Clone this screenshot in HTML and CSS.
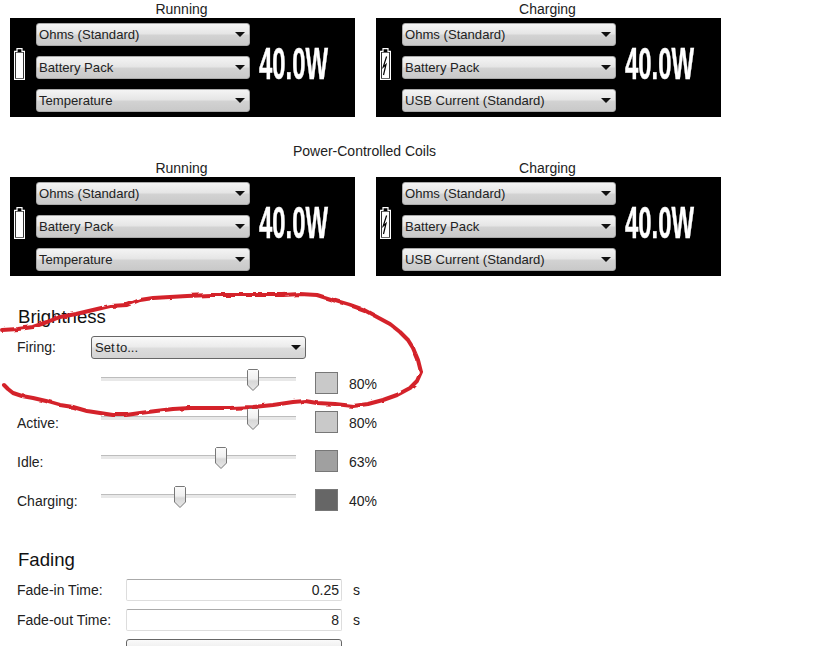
FILE: index.html
```html
<!DOCTYPE html>
<html lang="en">
<head>
  <meta charset="UTF-8" />
  <title>Display Settings</title>
  <link rel="stylesheet" href="styles.css">
</head>
<body>
  <div class="page">
    <div class="display-row">
      <div class="display-col">
        <div class="col-label">Running</div>
        <div class="panel">
          <svg class="battery" width="11" height="32" viewBox="0 0 11 32">
            <path d="M3 .6H8V3.3H10.4V31.4H.6V3.3H3Z" fill="none" stroke="#fff" stroke-width="1.2"/>
            <rect x="2" y="4.6" width="7" height="25.6" fill="#fff"/>
          </svg>
          <div class="dropdown-stack">
            <div class="dropdown">Ohms (Standard)</div>
            <div class="dropdown">Battery Pack</div>
            <div class="dropdown">Temperature</div>
          </div>
          <div class="watts"><span>40.0W</span></div>
        </div>
      </div>
      <div class="display-col">
        <div class="col-label">Charging</div>
        <div class="panel">
          <svg class="battery" width="11" height="32" viewBox="0 0 11 32">
            <path d="M3 .6H8V3.3H10.4V31.4H.6V3.3H3Z" fill="none" stroke="#fff" stroke-width="1.2"/>
            <rect x="2" y="4.6" width="7" height="25.6" fill="#fff"/>
            <path d="M6.6 8.5 3.2 19 6 16.5 3.5 27" fill="none" stroke="#000" stroke-width="1.2"/>
          </svg>
          <div class="dropdown-stack">
            <div class="dropdown">Ohms (Standard)</div>
            <div class="dropdown">Battery Pack</div>
            <div class="dropdown">USB Current (Standard)</div>
          </div>
          <div class="watts"><span>40.0W</span></div>
        </div>
      </div>
    </div>

    <div class="group-title">Power-Controlled Coils</div>
    <div class="display-row">
      <div class="display-col">
        <div class="col-label">Running</div>
        <div class="panel">
          <svg class="battery" width="11" height="32" viewBox="0 0 11 32">
            <path d="M3 .6H8V3.3H10.4V31.4H.6V3.3H3Z" fill="none" stroke="#fff" stroke-width="1.2"/>
            <rect x="2" y="4.6" width="7" height="25.6" fill="#fff"/>
          </svg>
          <div class="dropdown-stack">
            <div class="dropdown">Ohms (Standard)</div>
            <div class="dropdown">Battery Pack</div>
            <div class="dropdown">Temperature</div>
          </div>
          <div class="watts"><span>40.0W</span></div>
        </div>
      </div>
      <div class="display-col">
        <div class="col-label">Charging</div>
        <div class="panel">
          <svg class="battery" width="11" height="32" viewBox="0 0 11 32">
            <path d="M3 .6H8V3.3H10.4V31.4H.6V3.3H3Z" fill="none" stroke="#fff" stroke-width="1.2"/>
            <rect x="2" y="4.6" width="7" height="25.6" fill="#fff"/>
            <path d="M6.6 8.5 3.2 19 6 16.5 3.5 27" fill="none" stroke="#000" stroke-width="1.2"/>
          </svg>
          <div class="dropdown-stack">
            <div class="dropdown">Ohms (Standard)</div>
            <div class="dropdown">Battery Pack</div>
            <div class="dropdown">USB Current (Standard)</div>
          </div>
          <div class="watts"><span>40.0W</span></div>
        </div>
      </div>
    </div>

    <h2 class="section-title brightness-title">Brightness</h2>
    <div class="form-row firing-row">
      <label class="row-label">Firing:</label>
      <div class="dropdown dropdown-light firing-select">Set to...</div>
    </div>
    <div class="slider-row">
      <label class="row-label"></label>
      <div class="slider"><svg class="thumb" style="left: 146px" width="12" height="22" viewBox="0 0 12 22"><use href="#thumb-shape"/></svg></div>
      <div class="swatch" style="background-color: #c9c9c9"></div>
      <div class="percent">80%</div>
    </div>
    <div class="slider-row">
      <label class="row-label">Active:</label>
      <div class="slider"><svg class="thumb" style="left: 146px" width="12" height="22" viewBox="0 0 12 22"><use href="#thumb-shape"/></svg></div>
      <div class="swatch" style="background-color: #c9c9c9"></div>
      <div class="percent">80%</div>
    </div>
    <div class="slider-row">
      <label class="row-label">Idle:</label>
      <div class="slider"><svg class="thumb" style="left: 114px" width="12" height="22" viewBox="0 0 12 22"><use href="#thumb-shape"/></svg></div>
      <div class="swatch" style="background-color: #a0a0a0"></div>
      <div class="percent">63%</div>
    </div>
    <div class="slider-row">
      <label class="row-label">Charging:</label>
      <div class="slider"><svg class="thumb" style="left: 73px" width="12" height="22" viewBox="0 0 12 22"><use href="#thumb-shape"/></svg></div>
      <div class="swatch" style="background-color: #666666"></div>
      <div class="percent">40%</div>
    </div>

    <h2 class="section-title fading-title">Fading</h2>
    <div class="fade-row">
      <label class="fade-label">Fade-in Time:</label>
      <div class="number-box">0.25</div>
      <div class="unit">s</div>
    </div>
    <div class="fade-row">
      <label class="fade-label">Fade-out Time:</label>
      <div class="number-box">8</div>
      <div class="unit">s</div>
    </div>
    <div class="fade-row">
      <label class="fade-label"></label>
      <div class="dropdown dropdown-light fade-select"></div>
    </div>

    <svg class="hidden-defs" width="0" height="0">
      <defs>
        <linearGradient id="thumb-fill" x1="0" y1="0" x2="0" y2="1">
          <stop offset="0" stop-color="#fbfbfb"/>
          <stop offset="0.45" stop-color="#f0f0f0"/>
          <stop offset="0.55" stop-color="#d8d8d8"/>
          <stop offset="1" stop-color="#e8e8e8"/>
        </linearGradient>
        <path id="thumb-shape" d="M1.5.5H10.5L11.5 1.5V16L6 21.5.5 16V1.5Z" fill="url(#thumb-fill)" stroke="#777"/>
        <filter id="rough" x="-5%" y="-5%" width="110%" height="110%">
          <feTurbulence type="fractalNoise" baseFrequency="0.09" numOctaves="2" seed="4"/>
          <feDisplacementMap in="SourceGraphic" scale="3.5"/>
        </filter>
      </defs>
    </svg>

    <!-- red marker circled by hand on the screenshot -->
    <svg class="marker" width="829" height="646" viewBox="0 0 829 646">
      <path filter="url(#rough)" d="M2 330 18 329 33 327 47 322 60 317 76 314 93 310 110 306 127 305 140 300 153 298 170 297 187 296 210 295 233 295 258 295 283 295 300 294 317 295 333 300 350 305 364 310 377 317 390 324 400 332 408 340 413 348 418 360 421 372 417 381 410 388 397 395 383 400 368 404 353 406 335 404 317 403 305 401 293 402 273 405 253 407 230 408 207 408 190 408 173 409 156 411 140 413 126 415 113 415 100 413 87 411 73 407 60 405 46 401 33 398 22 396 13 393 8 389 4 385" fill="none" stroke="#d4232b" stroke-width="4" stroke-linejoin="round" stroke-linecap="round"/>
    </svg>
  </div>
</body>
</html>
```

FILE: styles.css
```css
html, body {
  margin: 0;
  background-color: #ffffff;
  overflow: hidden;
}

.page {
  position: relative;
  width: 829px;
  height: 646px;
  padding: 2px 0 0 0;
  box-sizing: border-box;
  overflow: hidden;
  font-family: "Liberation Sans", Arial, sans-serif;
  font-size: 14px;
  color: #222;
}

.display-row {
  display: flex;
  gap: 21px;
  margin-left: 10px;
}

.display-col {
  width: 345px;
}

.col-label {
  height: 15px;
  line-height: 15px;
  margin-bottom: 1px;
  padding-right: 2px;
  text-align: center;
}

.group-title {
  width: 709px;
  margin: 27px 0 2px 10px;
  height: 15px;
  line-height: 15px;
  text-align: center;
}

.panel {
  display: flex;
  align-items: flex-start;
  height: 99px;
  background-color: #000;
  overflow: hidden;
}

.battery {
  flex: none;
  margin: 30px 11px 0 4px;
}

.dropdown-stack {
  display: flex;
  flex-direction: column;
  gap: 10px;
  margin-top: 5px;
}

.dropdown {
  position: relative;
  box-sizing: border-box;
  width: 214px;
  height: 23px;
  line-height: 21px;
  padding-left: 2px;
  font-size: 13.1px;
  color: #222;
  border-radius: 3px;
  border: 1px solid #aaa;
  background: linear-gradient(#f4f4f4, #e6e6e6 45%, #d2d2d2 55%, #c9c9c9);
}

.dropdown::after {
  content: "";
  position: absolute;
  right: 4px;
  top: 8px;
  border-left: 5px solid transparent;
  border-right: 5px solid transparent;
  border-top: 5px solid #111;
}

.dropdown-light {
  border-color: #666;
  background: linear-gradient(#fafafa, #ececec 45%, #dcdcdc 55%, #d4d4d4);
}

.watts {
  width: 69px;
  margin: 30px 0 0 9px;
  line-height: 32px;
  height: 32px;
}

.watts span {
  display: inline-block;
  font-size: 45px;
  font-weight: bold;
  color: #fff;
  -webkit-text-stroke: 0.5px #fff;
  transform: scaleX(0.53);
  transform-origin: left center;
}

.section-title {
  margin: 0 0 0 18px;
  height: 22px;
  line-height: 22px;
  font-size: 18.6px;
  font-weight: normal;
  color: #111;
}

.brightness-title {
  margin-top: 30px;
}

.fading-title {
  margin-top: 29px;
}

.form-row {
  display: flex;
  align-items: center;
  margin-left: 17px;
}

.firing-row {
  margin-top: 8px;
  margin-bottom: 6px;
  height: 22px;
}

.row-label {
  flex: none;
  width: 74px;
}

.firing-select {
  width: 215px;
  line-height: 22px;
  padding-left: 3px;
  word-spacing: -2px;
}

.slider-row {
  display: flex;
  align-items: center;
  height: 39px;
  margin-left: 17px;
}

.slider-row .row-label {
  width: 84px;
}

.slider {
  position: relative;
  flex: none;
  width: 195px;
  height: 22px;
  margin-bottom: 8px;
  background: linear-gradient(#bdbdbd, #bdbdbd) 0 8px / 100% 1px no-repeat,
    linear-gradient(#e8e8e8, #e8e8e8) 0 9px / 100% 3px no-repeat;
}

.thumb {
  position: absolute;
  top: 0;
}

.swatch {
  flex: none;
  box-sizing: border-box;
  width: 23px;
  height: 22px;
  margin: 0 0 2px 19px;
  border: 1px solid #777;
}

.percent {
  margin-left: 11px;
}

.fade-row {
  display: flex;
  align-items: center;
  height: 22px;
  margin: 8px 0 0 17px;
}

.fade-label {
  flex: none;
  width: 109px;
}

.number-box {
  box-sizing: border-box;
  width: 216px;
  height: 22px;
  line-height: 20px;
  padding-right: 2px;
  text-align: right;
  border: 1px solid #ddd;
  border-top-color: #aaa;
  border-radius: 2px;
  background-color: #fff;
}

.unit {
  margin-left: 11px;
}

.fade-select {
  width: 216px;
}

.hidden-defs {
  position: absolute;
}

.marker {
  position: absolute;
  left: 0;
  top: 0;
  pointer-events: none;
}
```
